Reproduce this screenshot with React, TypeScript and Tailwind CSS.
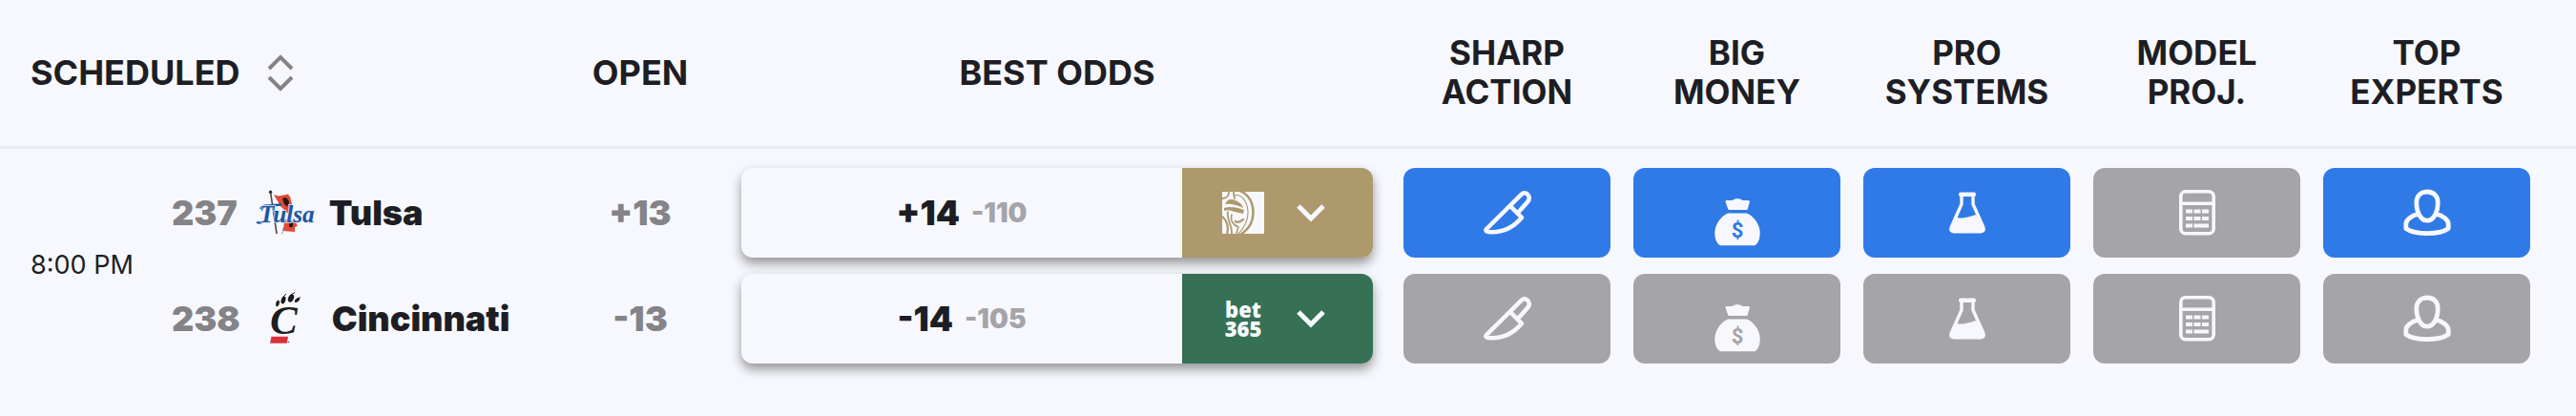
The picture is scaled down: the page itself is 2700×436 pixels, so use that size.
import type { ReactNode } from "react";
import clsx from "clsx";

type Signal = "sharp" | "money" | "systems" | "model" | "experts";

interface Side {
  rotation: number;
  team: string;
  logo: ReactNode;
  open: string;
  line: string;
  price: string;
  book: string;
  bookLogo: ReactNode;
  bookClass: string;
  active: Signal[];
}

function SortIcon() {
  return (
    <svg width="28" height="40" viewBox="0 0 28 40" fill="none" stroke="#848388" strokeWidth="4" aria-hidden="true">
      <path d="M2 16 L14 4 L26 16" />
      <path d="M2 25 L14 37 L26 25" />
    </svg>
  );
}

function ChevronIcon() {
  return (
    <svg width="30" height="20" viewBox="0 0 30 20" fill="none" stroke="#f7f8fd" strokeWidth="5" aria-hidden="true">
      <path d="M2 3 L15 16 L28 3" />
    </svg>
  );
}

function KnifeIcon() {
  return (
    <svg width="52" height="48" viewBox="0 0 52 48" fill="none" stroke="currentColor" strokeWidth="4.5" strokeLinejoin="round" strokeLinecap="round" aria-hidden="true">
      <path d="M4 41 L40.5 4.8 C43 2.3 46 3 47.8 5.5 C49.4 8 49 10.5 47 12.8 L36.5 24.5 L41 29 C33 38.5 22 44.5 9 44.3 C5 44.3 2 43.3 4 41 Z" />
      <path d="M29 17 L36.5 24.5" />
    </svg>
  );
}

function MoneyBagIcon({ dollar }: { dollar: string }) {
  return (
    <svg width="48" height="51" viewBox="0 0 48 51" fill="currentColor" aria-hidden="true">
      <path d="M12.5 3 H19 C21 0.5 27 0.5 29.5 3 H35.5 Q37.3 3 36.9 4.6 L34.8 12 Q34.5 13 33.5 13 H15.5 Q14.5 13 14.2 12 L11.6 4.6 Q11 3 12.5 3 Z" />
      <path d="M14 16.5 H34 C42 20 47.7 29 47.7 37 C47.7 43 46 48 42.5 50.3 H6 C2 48 0.3 43 0.3 37 C0.3 29 6 20 14 16.5 Z" />
      <text x="24" y="42" textAnchor="middle" fontFamily="Roboto, sans-serif" fontWeight="700" fontSize="22" className={dollar}>$</text>
    </svg>
  );
}

function FlaskIcon() {
  return (
    <svg width="38" height="44" viewBox="0 0 38 44" aria-hidden="true">
      <path d="M13 3 V13 L2.3 37 Q0.5 41.7 5 41.7 H33 Q37.5 41.7 35.7 37 L25 13 V3" fill="none" stroke="currentColor" strokeWidth="3.4" />
      <rect x="10" y="0.5" width="18" height="4.4" rx="2" fill="currentColor" />
      <path d="M8 27 C14 28.5 19 27 28 24 L36 39 L33 42 H5 L2 39 Z" fill="currentColor" />
    </svg>
  );
}

function CalculatorIcon() {
  return (
    <svg width="38" height="48" viewBox="0 0 38 48" aria-hidden="true">
      <rect x="1.8" y="1.8" width="34.4" height="44" rx="5" fill="none" stroke="currentColor" strokeWidth="3.6" />
      <path d="M2 14.2 H36" stroke="currentColor" strokeWidth="3.6" />
      <g fill="currentColor">
        <path d="M7 20.5h7v4H7zM15.5 20.5h7v4h-7zM24 20.5h7v4h-7z" />
        <path d="M7 28h7v4H7zM15.5 28h7v4h-7zM24 28h7v4h-7z" />
        <path d="M7 35.5h7v4H7zM15.5 35.5H31v4H15.5z" />
      </g>
    </svg>
  );
}

function ExpertIcon() {
  return (
    <svg width="50" height="50" viewBox="0 0 50 50" fill="none" stroke="currentColor" strokeWidth="4.8" strokeLinejoin="round" aria-hidden="true">
      <path d="M25 3 C17.5 3 13.8 8.2 13.8 14 C13.8 25 18.5 33.2 25 33.2 C31.5 33.2 36.2 25 36.2 14 C36.2 8.2 32.5 3 25 3 Z" />
      <path d="M16.2 26.2 C8 28 2.8 32.6 2.8 37 V41.5 C8 45.2 15.5 46.6 25 46.6 C34.5 46.6 42 45.2 47.2 41.5 V37 C47.2 32.6 42 28 33.8 26.2" />
    </svg>
  );
}

function TulsaLogo() {
  return (
    <svg width="58" height="48" viewBox="0 0 58 48" className="overflow-visible" aria-hidden="true">
      <path d="M19 5 L24 6.5 L34 4.5 L36.5 8 L37 12 L39 17 L34 25 L26 17 Z" fill="#e04a36" />
      <path d="M28 9 L32 8 L35 12 L34 18 L30 15 Z" fill="#2a1512" />
      <path d="M30 31 L41 32 L44 38 L41 39 L41 44 L29 43 Z" fill="#e04a36" />
      <path d="M35 34 L39 34 L39 39 L35 39 Z" fill="#2a1512" />
      <path d="M15.5 2 L22 46" stroke="#4a4648" strokeWidth="1.6" />
      <circle cx="15.5" cy="2.2" r="1.7" fill="#2d2a2c" />
      <path d="M29 39 Q29 44 27 46.5" fill="none" stroke="#77747a" strokeWidth="0.8" />
      <path d="M1 34 Q6 36 11 31" fill="none" stroke="#1f559f" strokeWidth="2.4" />
      <path d="M5 20 Q7 16 13 16.5 L27 15.5" fill="none" stroke="#1f559f" strokeWidth="2.6" />
      <text x="4" y="34" fontFamily="'Liberation Serif', serif" fontStyle="italic" fontWeight="700" fontSize="25" fill="#1f559f" stroke="#dfe8f6" strokeWidth="1.4" paintOrder="stroke">Tulsa</text>
    </svg>
  );
}

function CincinnatiLogo() {
  return (
    <svg width="34" height="56" viewBox="0 0 34 56" aria-hidden="true">
      <g fill="#1f1c1d">
        <ellipse cx="8" cy="12" rx="1.8" ry="3.3" transform="rotate(12 8 12)" />
        <ellipse cx="14" cy="8.5" rx="2.3" ry="4" transform="rotate(18 14 8.5)" />
        <ellipse cx="22" cy="6.5" rx="2.8" ry="4.5" transform="rotate(24 22 6.5)" />
        <ellipse cx="28.5" cy="8.5" rx="1.7" ry="3.2" transform="rotate(48 28.5 8.5)" />
        <path d="M14 5 L17 2 M22 3 L26 0.5 M29 7 L32 5.5" stroke="#1f1c1d" strokeWidth="1" />
      </g>
      <text x="0" y="44" fontFamily="'Liberation Serif', serif" fontStyle="italic" fontWeight="700" fontSize="43" fill="#1f1c1d">C</text>
      <path d="M1.5 46.8 H19 L17.8 53.8 H0 Z" fill="#d9303e" />
      <circle cx="19.5" cy="52.5" r="0.8" fill="#55525a" />
    </svg>
  );
}

function LionLogo() {
  return (
    <svg width="44" height="44" viewBox="0 0 44 44" aria-hidden="true">
      <rect width="44" height="44" fill="#f7f8fd" />
      <g fill="none" stroke="#ad996c" strokeLinecap="round">
        <path d="M19 -1 C28 3 32.5 12 32.5 22 C32.5 32 27 40 19 45" strokeWidth="2.6" />
        <path d="M12 4 C20 1.5 26.5 10 27 21 C27.5 31 22 39 16 45" strokeWidth="1.1" />
        <path d="M7 0 C7 4 5 7 0 7 M12 0 L13 7" strokeWidth="1.8" />
        <path d="M0 26 C5 30 7 37 5 45" strokeWidth="2.2" />
        <path d="M6 21 C4 29 11 34 10 45" strokeWidth="1.8" />
        <path d="M10 24 C8 30 12 35 17 37 C16 40 15 42 15 45" strokeWidth="1.6" />
        <path d="M14 31 C17 33 20 31 22 29" strokeWidth="2.4" />
      </g>
      <g fill="#ad996c">
        <path d="M3 13 C5 8 9 7 14 9 C18 11 21 13 22 17 C16 14 9 12 3 13 Z" />
        <path d="M2 17 C8 15 15 16 23 19 L22 23 L13 21 C8 19 5 19 2 20 Z" />
      </g>
    </svg>
  );
}

function Bet365Logo() {
  return (
    <span className="block w-11 text-center font-['Open_Sans',sans-serif] text-[22px] leading-5 font-extrabold text-[#f7f8fd]">
      bet
      <br />
      365
    </span>
  );
}

const signals: { key: Signal; title: [string, string] }[] = [
  { key: "sharp", title: ["Sharp", "Action"] },
  { key: "money", title: ["Big", "Money"] },
  { key: "systems", title: ["Pro", "Systems"] },
  { key: "model", title: ["Model", "Proj."] },
  { key: "experts", title: ["Top", "Experts"] },
];

const sides: Side[] = [
  {
    rotation: 237,
    team: "Tulsa",
    logo: <TulsaLogo />,
    open: "+13",
    line: "+14",
    price: "-110",
    book: "BetMGM",
    bookLogo: <LionLogo />,
    bookClass: "bg-[#ad996c]",
    active: ["sharp", "money", "systems", "experts"],
  },
  {
    rotation: 238,
    team: "Cincinnati",
    logo: <CincinnatiLogo />,
    open: "-13",
    line: "-14",
    price: "-105",
    book: "bet365",
    bookLogo: <Bet365Logo />,
    bookClass: "bg-[#367156]",
    active: [],
  },
];

function SignalButton({ signal, label, active }: { signal: Signal; label: string; active: boolean }) {
  return (
    <button
      type="button"
      aria-label={label}
      className={clsx(
        "flex h-[94px] w-full items-center justify-center rounded-xl text-[#f7f8fd]",
        active ? "bg-[#307ae8]" : "bg-[#a5a4a9]",
        signal === "money" && "pt-5"
      )}
    >
      {signal === "sharp" && <KnifeIcon />}
      {signal === "money" && <MoneyBagIcon dollar={active ? "fill-[#307ae8]" : "fill-[#a5a4a9]"} />}
      {signal === "systems" && <FlaskIcon />}
      {signal === "model" && <CalculatorIcon />}
      {signal === "experts" && <ExpertIcon />}
    </button>
  );
}

function BestOdds({ side }: { side: Side }) {
  return (
    <div className="flex h-[94px] overflow-hidden rounded-xl bg-[#f7f8fd] shadow-[0_6px_12px_rgba(0,0,0,0.4)]">
      <div className="flex flex-1 items-center justify-center gap-3">
        <span className="text-4xl font-black">{side.line}</span>
        <span className="text-[28px] font-black text-[#a5a4a9]">{side.price}</span>
      </div>
      <button
        type="button"
        aria-label={`Change sportsbook, ${side.book}`}
        className={clsx("flex w-[200px] items-center gap-[34px] pl-[42px]", side.bookClass)}
      >
        {side.bookLogo}
        <ChevronIcon />
      </button>
    </div>
  );
}

export default function App() {
  return (
    <main className="min-h-screen bg-[#f7f8fd] font-[Inter,sans-serif] text-[#1d1e24]">
      <table className="w-full table-fixed border-collapse">
        <colgroup>
          <col className="w-[180px]" />
          <col className="w-[405px]" />
          <col className="w-[172px]" />
          <col />
          {signals.map((s) => (
            <col key={s.key} className="w-[241px]" />
          ))}
          <col className="w-9" />
        </colgroup>
        <thead>
          <tr className="h-[154px] border-b-[3px] border-[#ebecf1] text-4xl uppercase">
            <th scope="col" colSpan={2} className="pl-8 text-left font-bold">
              <button type="button" className="flex items-center gap-7 font-bold uppercase">
                Scheduled
                <SortIcon />
              </button>
            </th>
            <th scope="col" className="font-bold">Open</th>
            <th scope="col" className="font-bold">Best Odds</th>
            {signals.map((s) => (
              <th key={s.key} scope="col" className="text-[35px] leading-[41px] font-bold">
                {s.title[0]}
                <br />
                {s.title[1]}
              </th>
            ))}
            <td />
          </tr>
        </thead>
        <tbody>
          {sides.map((side, i) => (
            <tr key={side.rotation} className={i === 0 ? "*:pt-5" : "*:pt-[17px]"}>
              {i === 0 && (
                <td rowSpan={2} className="pl-8 text-[27px] whitespace-nowrap">
                  8:00 PM
                </td>
              )}
              <td>
                <div className="flex items-center gap-[19px] text-4xl font-black">
                  <span className="text-[#848388]">{side.rotation}</span>
                  <span className="flex w-[58px] justify-center">{side.logo}</span>
                  <span>{side.team}</span>
                </div>
              </td>
              <td className="text-center text-4xl font-black text-[#848388]">{side.open}</td>
              <td className="px-5">
                <BestOdds side={side} />
              </td>
              {signals.map((s) => (
                <td key={s.key} className="px-3">
                  <SignalButton signal={s.key} label={`${s.title.join(" ")}, ${side.team}`} active={side.active.includes(s.key)} />
                </td>
              ))}
              <td />
            </tr>
          ))}
        </tbody>
      </table>
    </main>
  );
}
